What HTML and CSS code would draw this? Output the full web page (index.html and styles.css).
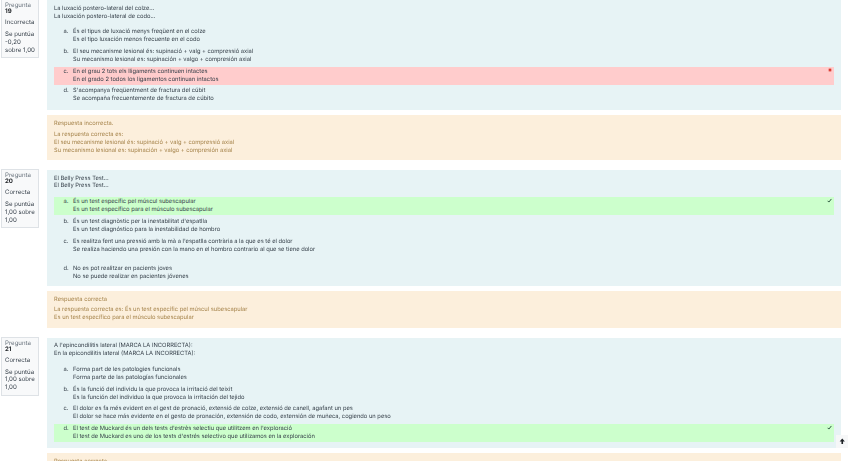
FILE: index.html
```html
<!DOCTYPE html>
<html lang="ca">
<head>
<meta charset="utf-8">
<title>Revisió</title>
<link rel="stylesheet" href="styles.css">
</head>
<body>
<main class="page">
  <section class="que first">
    <aside class="info"><div class="qn">Pregunta <b>19</b></div><div class="state">Incorrecta</div><div class="grade">Se puntúa -0,20 sobre 1,00</div></aside>
    <div class="body">
      <div class="formulation">
        <p class="qtext">La luxació postero-lateral del colze...<br>La luxación postero-lateral de codo...</p>
        <div class="answers">
          <div class="opt"><span class="let">a.</span><div>És el tipus de luxació menys freqüent en el colze<br>Es el tipo luxación menos frecuente en el codo</div></div>
          <div class="opt"><span class="let">b.</span><div>El seu mecanisme lesional és: supinació + valg + compressió axial<br>Su mecanismo lesional es: supinación + valgo + compresión axial</div></div>
          <div class="opt wrong"><span class="let">c.</span><div>En el grau 2 tots els lligaments continuen intactes<br>En el grado 2 todos los ligamentos continuan intactos</div>
            <svg class="mark cross" viewBox="0 0 8 8"><path d="M1.5 1.5l5 5M6.5 1.5l-5 5" stroke="#d9382e" stroke-width="2.2" fill="none"/></svg></div>
          <div class="opt"><span class="let">d.</span><div>S'acompanya freqüentment de fractura del cúbit<br>Se acompaña frecuentemente de fractura de cúbito</div></div>
        </div>
      </div>
      <div class="feedback">
        <p>Respuesta incorrecta.</p>
        <p>La respuesta correcta es:<br>El seu mecanisme lesional és: supinació + valg + compressió axial<br>Su mecanismo lesional es: supinación + valgo + compresión axial</p>
      </div>
    </div>
  </section>

  <section class="que">
    <aside class="info"><div class="qn">Pregunta <b>20</b></div><div class="state">Correcta</div><div class="grade">Se puntúa 1,00 sobre 1,00</div></aside>
    <div class="body">
      <div class="formulation tight">
        <p class="qtext">El Belly Press Test...<br>El Belly Press Test...</p>
        <div class="answers">
          <div class="opt right"><span class="let">a.</span><div>És un test específic pel múscul subescapular<br>Es un test específico para el músculo subescapular</div>
            <svg class="mark" viewBox="0 0 8 8"><path d="M1 4.5l2 2 4-5" stroke="#2f5a40" stroke-width="1.6" fill="none"/></svg></div>
          <div class="opt"><span class="let">b.</span><div>És un test diagnòstic per la inestabilitat d'espatlla<br>Es un test diagnóstico para la inestabilidad de hombro</div></div>
          <div class="opt"><span class="let">c.</span><div>Es realitza fent una pressió amb la mà a l'espatlla contrària a la que es té el dolor<br>Se realiza haciendo una presión con la mano en el hombro contrario al que se tiene dolor<br>&nbsp;</div></div>
          <div class="opt"><span class="let">d.</span><div>No es pot realitzar en pacients joves<br>No se puede realizar en pacientes jóvenes</div></div>
        </div>
      </div>
      <div class="feedback">
        <p>Respuesta correcta</p>
        <p>La respuesta correcta es: És un test específic pel múscul subescapular<br>Es un test específico para el músculo subescapular</p>
      </div>
    </div>
  </section>

  <section class="que">
    <aside class="info"><div class="qn">Pregunta <b>21</b></div><div class="state">Correcta</div><div class="grade">Se puntúa 1,00 sobre 1,00</div></aside>
    <div class="body">
      <div class="formulation">
        <p class="qtext">A l'epincondilitis lateral (MARCA LA INCORRECTA):<br>En la epicondilitis lateral (MARCA LA INCORRECTA):</p>
        <div class="answers">
          <div class="opt"><span class="let">a.</span><div>Forma part de les patologies funcionals<br>Forma parte de las patologías funcionales</div></div>
          <div class="opt"><span class="let">b.</span><div>És la funció del individu la que provoca la irritació del teixit<br>Es la función del individuo la que provoca la irritación del tejido</div></div>
          <div class="opt"><span class="let">c.</span><div>El dolor es fa més evident en el gest de pronació, extensió de colze, extensió de canell, agafant un pes<br>El dolor se hace más evidente en el gesto de pronación, extensión de codo, extensión de muñeca, cogiendo un peso</div></div>
          <div class="opt right"><span class="let">d.</span><div>El test de Muckard és un dels tests d'estrès selectiu que utilitzem en l'exploració<br>El test de Muckard es uno de los tests d'estrés selectivo que utilizamos en la exploración</div>
            <svg class="mark" viewBox="0 0 8 8"><path d="M1 4.5l2 2 4-5" stroke="#2f5a40" stroke-width="1.6" fill="none"/></svg></div>
        </div>
      </div>
      <div class="feedback">
        <p>Respuesta correcta</p>
      </div>
    </div>
  </section>
</main>
<button class="totop" aria-label="Arriba"><svg viewBox="0 0 8 8"><path d="M4 0.5L0.8 4.4h2.2V7.5h2V4.4h2.2z" fill="#1d2125"/></svg></button>
</body>
</html>
```
FILE: styles.css
```css
html, body {
  margin: 0;
  padding: 0;
  height: 100%;
  overflow: hidden;
  background: #fff;
}
body {
  font-family: Inter, "Liberation Sans", sans-serif;
  font-size: 5.78px;
  line-height: 7.9px;
  color: #333d47;
  position: relative;
  text-rendering: geometricPrecision;
}
p { margin: 0; }
.page {
  padding: 0 7px 0 1px;
  height: 461px;
  overflow: hidden;
  filter: blur(0.25px);
}
.que {
  display: flex;
  align-items: flex-start;
  gap: 8px;
  margin-bottom: 9px;
}
.que.first {
  margin-top: -1px;
}
.info {
  flex: 0 0 38px;
  box-sizing: border-box;
  width: 38px;
  padding: 3px 3px 3px;
  background: #f8f9fa;
  border: 1px solid #dee2e6;
  font-size: 6.1px;
}
.qn { color: #6a747e; line-height: 6.4px; width: 30px; }
.qn b { display: block; color: #1d2125; font-weight: 700; }
.state { margin-top: 3.5px; }
.grade { margin-top: 3.5px; }
.body { flex: 1; min-width: 0; padding-top: 1px; }
.formulation {
  background: #e7f3f5;
  padding: 3px 7px 5.5px;
}
.formulation.tight { padding-bottom: 3.5px; }
.qtext { margin-bottom: 6.9px; margin-top: 1.6px; }
.answers {
  display: flex;
  flex-direction: column;
  gap: 1.7px;
}
.opt {
  position: relative;
  display: flex;
  padding: 1px 7px 1px 9.5px;
  min-height: 16px;
}
.let { width: 9.5px; flex: none; }
.wrong { background: #ffcccc; }
.right { background: #ccffcc; }
.mark {
  position: absolute;
  top: 1px;
  right: 2px;
  width: 5px;
  height: 5px;
}
.mark.cross {
  right: 2.5px;
  width: 4px;
  height: 4px;
}
.feedback {
  margin-top: 5.5px;
  background: #fcefdc;
  color: #a5834a;
  padding: 5px 7px 5.5px;
}
.feedback p + p { margin-top: 2.5px; }
.totop {
  position: absolute;
  right: 0;
  bottom: 13px;
  width: 12px;
  height: 13px;
  padding: 0 1px;
  border: 0;
  background: #f6f7f8;
  display: flex;
  align-items: center;
  justify-content: center;
}
.totop svg { width: 6.5px; height: 6.5px; }
```
